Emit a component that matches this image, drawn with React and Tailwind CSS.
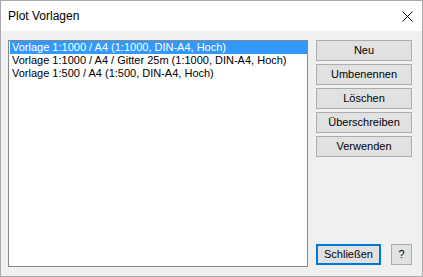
const ITEMS = [
  'Vorlage 1:1000 / A4 (1:1000, DIN-A4, Hoch)',
  'Vorlage 1:1000 / A4 / Gitter 25m (1:1000, DIN-A4, Hoch)',
  'Vorlage 1:500 / A4 (1:500, DIN-A4, Hoch)',
]

const ACTIONS = ['Neu', 'Umbenennen', 'Löschen', 'Überschreiben', 'Verwenden']

const font = { fontFamily: '"Segoe UI", "Liberation Sans", Arial, sans-serif' }

export default function App() {
  return (
    <div
      className="w-[423px] h-[277px] border border-[#aaaaaa] flex flex-col text-[11px] text-black bg-[#f0f0f0]"
      style={font}
    >
      {/* Title bar */}
      <div className="h-[30px] bg-white flex items-center justify-between pl-[7px] pr-[9px]">
        <span className="text-[12px] leading-none">Plot Vorlagen</span>
        <svg width="11" height="11" viewBox="0 0 11 11" className="text-black">
          <path d="M0.5 0.5 L10.5 10.5 M10.5 0.5 L0.5 10.5" stroke="currentColor" strokeWidth="1" fill="none" />
        </svg>
      </div>

      {/* Body */}
      <div className="flex-1 flex pt-[9px] pl-[7px] pr-[10px] pb-[9px] gap-[8px]">
        {/* List */}
        <div className="w-[300px] h-[227px] bg-white border border-[#828790] pl-[1px]">
          {ITEMS.map((item, i) => (
            <div
              key={i}
              className={
                i === 0
                  ? 'h-[13px] leading-[13px] pl-[2px] bg-[#3399ff] text-white whitespace-nowrap'
                  : 'h-[13px] leading-[13px] pl-[2px] whitespace-nowrap'
              }
            >
              {item}
            </div>
          ))}
        </div>

        {/* Buttons */}
        <div className="w-[96px] flex flex-col justify-between">
          <div className="flex flex-col gap-[3px]">
            {ACTIONS.map(a => (
              <button
                key={a}
                className="h-[21px] w-full bg-[#e1e1e1] border border-[#adadad] text-[11px] leading-none"
              >
                {a}
              </button>
            ))}
          </div>
          <div className="flex items-center gap-[10px] mb-[2px]">
            <button className="h-[21px] w-[65px] bg-[#e1e1e1] border-2 border-[#0078d7] text-[11px] leading-none">
              Schließen
            </button>
            <button className="h-[21px] w-[21px] bg-[#e1e1e1] border border-[#adadad] text-[11px] leading-none">
              ?
            </button>
          </div>
        </div>
      </div>
    </div>
  )
}
